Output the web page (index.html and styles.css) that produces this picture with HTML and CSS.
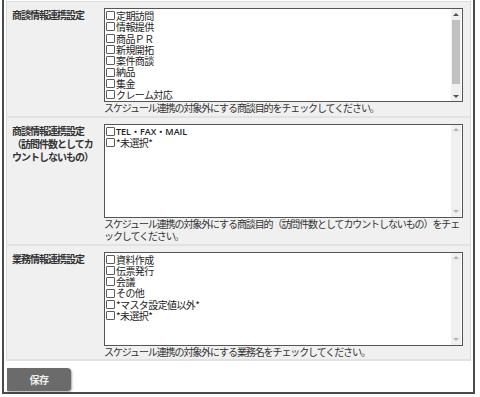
FILE: index.html
```html
<!DOCTYPE html>
<html>
<head>
    <title>スケジュール連携設定</title>
    <link rel="stylesheet" href="styles.css">
</head>
<body>
    <div class="frame">
        <table class="settings">
            <tr>
                <th>商談情報連携設定</th>
                <td>
                    <div class="listbox">
                        <div class="options">
                            <label class="item"><input type="checkbox">定期訪問</label>
                            <label class="item"><input type="checkbox">情報提供</label>
                            <label class="item"><input type="checkbox">商品ＰＲ</label>
                            <label class="item"><input type="checkbox">新規開拓</label>
                            <label class="item"><input type="checkbox">案件商談</label>
                            <label class="item"><input type="checkbox">納品</label>
                            <label class="item"><input type="checkbox">集金</label>
                            <label class="item"><input type="checkbox">クレーム対応</label>
                        </div>
                        <div class="scrollbar">
                            <span class="arrow arrow-up"></span>
                            <span class="track"><span class="thumb"></span></span>
                            <span class="arrow arrow-down"></span>
                        </div>
                    </div>
                    <p class="help">スケジュール連携の対象外にする商談目的をチェックしてください。</p>
                </td>
            </tr>
            <tr>
                <th>商談情報連携設定<br>（訪問件数としてカウントしないもの）</th>
                <td>
                    <div class="listbox">
                        <div class="options">
                            <label class="item item-latin"><input type="checkbox">TEL・FAX・MAIL</label>
                            <label class="item"><input type="checkbox">*未選択*</label>
                        </div>
                        <div class="scrollbar scrollbar-off">
                            <span class="arrow arrow-up"></span>
                            <span class="track"></span>
                            <span class="arrow arrow-down"></span>
                        </div>
                    </div>
                    <p class="help">スケジュール連携の対象外にする商談目的（訪問件数としてカウントしないもの）をチェックしてください。</p>
                </td>
            </tr>
            <tr>
                <th>業務情報連携設定</th>
                <td>
                    <div class="listbox">
                        <div class="options">
                            <label class="item"><input type="checkbox">資料作成</label>
                            <label class="item"><input type="checkbox">伝票発行</label>
                            <label class="item"><input type="checkbox">会議</label>
                            <label class="item"><input type="checkbox">その他</label>
                            <label class="item"><input type="checkbox">*マスタ設定値以外*</label>
                            <label class="item"><input type="checkbox">*未選択*</label>
                        </div>
                        <div class="scrollbar scrollbar-off">
                            <span class="arrow arrow-up"></span>
                            <span class="track"></span>
                            <span class="arrow arrow-down"></span>
                        </div>
                    </div>
                    <p class="help">スケジュール連携の対象外にする業務名をチェックしてください。</p>
                </td>
            </tr>
        </table>
        <div class="actions">
            <button class="btn-save" type="button">保存</button>
        </div>
    </div>
</body>
</html>
```

FILE: styles.css
```css
body {
    margin: 0;
    background: #fff;
    font-family: "Noto Sans CJK JP", "Noto Sans", sans-serif;
    color: #222;
}
.frame {
    width: 465px;
    margin-left: 2px;
    border: 2px solid #4a4a4a;
    border-top: none;
    padding: 1px 2px 0 2px;
}
.settings {
    width: 100%;
    border-collapse: collapse;
    background: #f0f0f0;
    border: 1px solid #dcdcdc;
}
.settings tr {
    border-bottom: 2px solid #e2e2e2;
}
.settings th {
    width: 86px;
    padding: 6px 4px 0 5px;
    text-align: left;
    vertical-align: top;
    font-size: 10px;
    line-height: 13px;
    letter-spacing: -1px;
    font-weight: bold;
    color: #333;
}
.settings td {
    padding: 6px 7px 1px 2px;
    vertical-align: top;
}

/* list of checkboxes with a drawn scrollbar */
.listbox {
    display: flex;
    height: 92px;
    background: #fff;
    border: 1px solid #555;
}
.options {
    flex: 1;
    overflow: hidden;
    padding: 1px 0 0 1px;
}
.scrollbar {
    display: flex;
    flex-direction: column;
    width: 10px;
    margin-right: 1px;
    background: #f0f0f0;
}
.arrow {
    height: 10px;
    display: flex;
    align-items: center;
    justify-content: center;
}
.arrow::after {
    content: "";
    border-left: 3px solid transparent;
    border-right: 3px solid transparent;
}
.arrow-up::after {
    border-bottom: 3px solid #505050;
}
.arrow-down::after {
    border-top: 3px solid #505050;
}
.scrollbar-off .arrow-up::after {
    border-bottom-color: #b4b4b4;
}
.scrollbar-off .arrow-down::after {
    border-top-color: #b4b4b4;
}
.track {
    flex: 1;
    padding: 1px 1px 0 1px;
}
.thumb {
    display: block;
    height: 64px;
    background: #c1c1c1;
}

.item {
    display: flex;
    align-items: center;
    height: 11.3px;
    font-size: 10px;
    line-height: 11.3px;
    letter-spacing: -0.6px;
    white-space: nowrap;
}
.item-latin {
    font-family: "Open Sans", "Noto Sans CJK JP", sans-serif;
    letter-spacing: 0;
    font-weight: 600;
    font-size: 9px;
}
.item input {
    appearance: none;
    width: 9px;
    height: 9px;
    margin: 0 1px 0 0;
    border: 1px solid #5c5c5c;
    border-radius: 1px;
    background: #fff;
    flex: none;
}
.help {
    margin: 0;
    font-size: 10px;
    line-height: 12.5px;
    letter-spacing: -1.1px;
    color: #333;
}
.actions {
    padding: 7px 0 1px 1px;
}
.btn-save {
    display: block;
    width: 64px;
    height: 23px;
    border: none;
    border-radius: 0 4px 4px 0;
    background: #6b6b6b;
    box-shadow: 1px 1px 2px rgba(0, 0, 0, 0.35);
    color: #eee;
    font-family: "Noto Sans CJK JP", sans-serif;
    font-size: 10px;
    font-weight: bold;
    letter-spacing: -0.5px;
    cursor: pointer;
}
```
